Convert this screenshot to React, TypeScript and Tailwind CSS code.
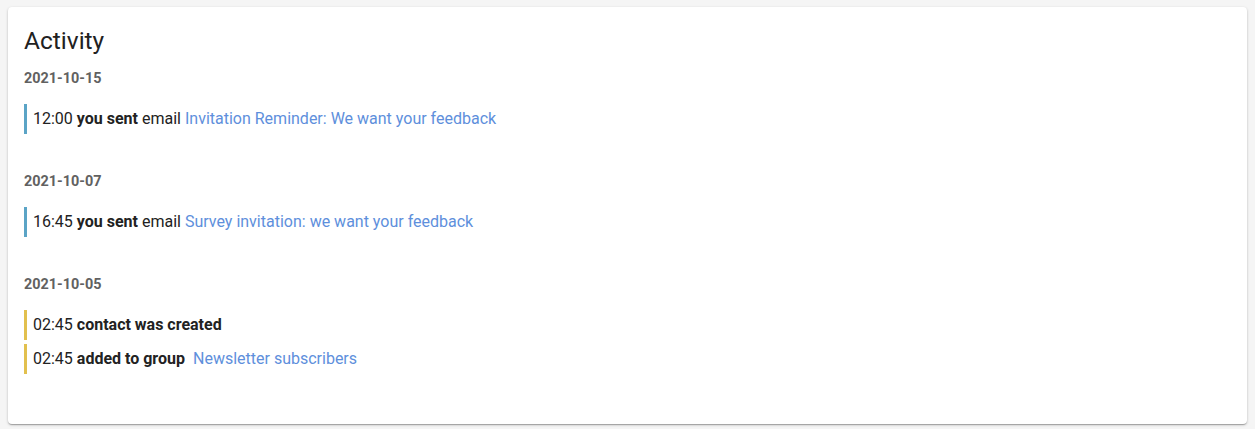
import React from "react";

type Entry = { time: string; bold: string; plain?: string; link?: string; color: "blue" | "yellow"; gap?: boolean };

const groups: { date: string; entries: Entry[] }[] = [
  { date: "2021-10-15", entries: [{ time: "12:00", bold: "you sent", plain: "email", link: "Invitation Reminder: We want your feedback", color: "blue" }] },
  { date: "2021-10-07", entries: [{ time: "16:45", bold: "you sent", plain: "email", link: "Survey invitation: we want your feedback", color: "blue" }] },
  {
    date: "2021-10-05",
    entries: [
      { time: "02:45", bold: "contact was created", color: "yellow" },
      { time: "02:45", bold: "added to group", link: "Newsletter subscribers", color: "yellow", gap: true },
    ],
  },
];

export default function App() {
  return (
    <div className="w-[1255px] h-[429px] bg-[#f5f5f5] pt-[7px] px-[8px]" style={{ fontFamily: "Roboto, 'Liberation Sans', sans-serif" }}>
      <div className="bg-white rounded-[4px] shadow-[0_1px_3px_rgba(0,0,0,0.2),0_1px_1px_rgba(0,0,0,0.14),0_2px_1px_-1px_rgba(0,0,0,0.12)] h-[417px] px-4 pt-[20px]">
        <h2 className="text-[24.5px] leading-[28px] text-[#212121] font-normal">Activity</h2>
        <div className="flex flex-col mt-[14px]">
          {groups.map((g, i) => (
            <div key={i} className="mb-[38px]">
              <div className="text-[14.4px] leading-[20px] font-bold text-[#616161]">{g.date}</div>
              <div className="flex flex-col gap-[4px] mt-[15px]">
                {g.entries.map((e, j) => (
                  <div key={j} className="flex items-center h-[30px]">
                    <div className={`w-[3px] h-[30px] ${e.color === "blue" ? "bg-[#5ba4c6]" : "bg-[#e2c04e]"}`} />
                    <div className="pl-[6px] text-[16px] text-[#222222] whitespace-pre">
                      {e.time} <span className="font-bold">{e.bold}</span>
                      {e.plain ? ` ${e.plain}` : ""}
                      {e.link ? <span className={`text-[#5e8fdc] ${e.gap ? "ml-[8px]" : "ml-[4px]"}`}>{e.link}</span> : null}
                    </div>
                  </div>
                ))}
              </div>
            </div>
          ))}
        </div>
      </div>
    </div>
  );
}
